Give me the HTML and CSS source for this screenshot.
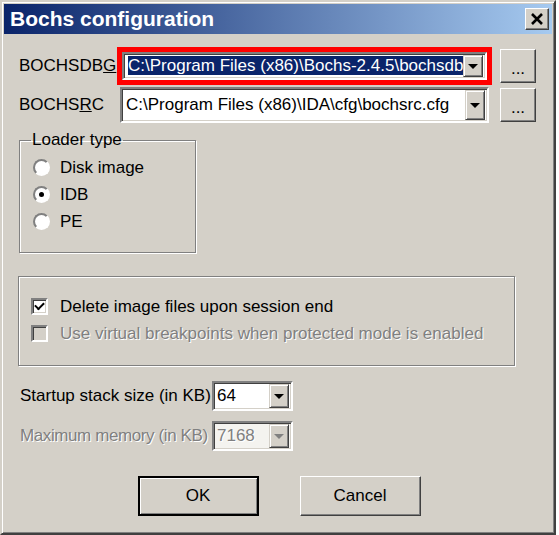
FILE: index.html
```html
<!DOCTYPE html>
<html lang="en">
<head>
    <meta charset="UTF-8">
    <title>Bochs configuration</title>
    <link rel="stylesheet" href="styles.css">
</head>
<body>
    <div class="window">
        <div class="titlebar">
            <span class="title">Bochs configuration</span>
            <button class="close-btn" aria-label="Close">
                <svg width="14" height="12" viewBox="0 0 14 12">
                    <path d="M2 1 L12 11 M12 1 L2 11" stroke="#000" stroke-width="2.6" fill="none"/>
                </svg>
            </button>
        </div>

        <div class="content">
            <div class="path-row">
                <span class="path-label label-dbg">BOCHSDB<u>G</u></span>
                <div class="highlight">
                    <div class="combo combo-dbg">
                        <span class="combo-value"><span class="selected">C:\Program Files (x86)\Bochs-2.4.5\bochsdbg.exe</span></span>
                        <span class="combo-btn"><span class="arrow"></span></span>
                    </div>
                </div>
                <button class="btn browse-btn">...</button>
            </div>

            <div class="path-row row-src">
                <span class="path-label label-src">BOCHS<u>R</u>C</span>
                <div class="combo combo-src">
                    <span class="combo-value">C:\Program Files (x86)\IDA\cfg\bochsrc.cfg</span>
                    <span class="combo-btn"><span class="arrow"></span></span>
                </div>
                <button class="btn browse-btn">...</button>
            </div>

            <fieldset class="group loader-group">
                <legend>Loader type</legend>
                <div class="option"><span class="radio"></span>Disk image</div>
                <div class="option"><span class="radio checked"></span>IDB</div>
                <div class="option"><span class="radio"></span>PE</div>
            </fieldset>

            <div class="group options-group">
                <div class="option"><span class="checkbox checked"></span>Delete image files upon session end</div>
                <div class="option disabled"><span class="checkbox"></span>Use virtual breakpoints when protected mode is enabled</div>
            </div>

            <div class="size-row">
                <span class="size-label">Startup stack size (in KB)</span>
                <div class="combo combo-small">
                    <span class="combo-value">64</span>
                    <span class="combo-btn"><span class="arrow"></span></span>
                </div>
            </div>
            <div class="size-row row-memory disabled">
                <span class="size-label">Maximum memory (in KB)</span>
                <div class="combo combo-small">
                    <span class="combo-value">7168</span>
                    <span class="combo-btn"><span class="arrow"></span></span>
                </div>
            </div>

            <div class="actions">
                <button class="btn action-btn default-btn">OK</button>
                <button class="btn action-btn">Cancel</button>
            </div>
        </div>
    </div>
</body>
</html>
```

FILE: styles.css
```css
:root {
    --face: #d4d0c8;
    --shadow: #808080;
    --dark: #404040;
    --light: #ffffff;
    --title-start: #0a246a;
    --title-end: #a6caf0;
    --disabled: #808080;
}

* {
    box-sizing: border-box;
}

body {
    margin: 0;
    background: #ffffff;
    font-family: 'Liberation Sans', Arial, sans-serif;
    font-size: 17px;
    color: #000;
}

.window {
    width: 556px;
    height: 535px;
    padding: 2px;
    background: var(--face);
    border: 2px solid;
    border-color: var(--face) var(--dark) var(--dark) var(--face);
    box-shadow: inset 1px 1px var(--light), inset -1px -1px var(--shadow);
}

.titlebar {
    height: 30px;
    display: flex;
    align-items: center;
    justify-content: space-between;
    padding: 0 3px 0 6px;
    background: linear-gradient(to right, var(--title-start), var(--title-end));
}

.title {
    color: #fff;
    font-weight: bold;
    font-size: 21px;
    line-height: 30px;
}

.close-btn {
    width: 24px;
    height: 22px;
    padding: 0;
    display: flex;
    align-items: center;
    justify-content: center;
    background: var(--face);
    border: 1px solid;
    border-color: var(--light) var(--dark) var(--dark) var(--light);
    box-shadow: inset -1px -1px var(--shadow);
}

.content {
    padding: 0 16px 0 15px;
}

/* path rows */
.path-row {
    display: flex;
    align-items: center;
    margin-top: 13px;
}

.row-src {
    margin-top: 2px;
}

.path-label {
    line-height: 20px;
    flex-shrink: 0;
}

.label-dbg {
    width: 98px;
}

.label-src {
    width: 101px;
}

.highlight {
    width: 375px;
    height: 38px;
    flex-shrink: 0;
    border: 5px solid #f00;
}

.combo {
    display: flex;
    flex-shrink: 0;
    background: #fff;
    border: 2px solid;
    border-color: var(--shadow) var(--light) var(--light) var(--shadow);
    box-shadow: inset 1px 1px var(--dark), inset -1px -1px var(--face);
    padding: 1px 2px 1px 3px;
}

.combo-dbg {
    height: 28px;
}

.combo-src {
    width: 369px;
    height: 36px;
}

.combo-value {
    flex: 1;
    overflow: hidden;
    white-space: nowrap;
    line-height: 20px;
    align-self: center;
    padding-left: 1px;
}

.selected {
    background: var(--title-start);
    color: #fff;
}

.combo-btn {
    width: 20px;
    display: flex;
    align-items: center;
    justify-content: center;
    background: var(--face);
    border: 1px solid;
    border-color: var(--face) var(--dark) var(--dark) var(--face);
    box-shadow: inset 1px 1px var(--light), inset -1px -1px var(--shadow);
}

.arrow {
    width: 0;
    height: 0;
    border-left: 5px solid transparent;
    border-right: 5px solid transparent;
    border-top: 5px solid #000;
}

.btn {
    font-family: inherit;
    font-size: 17px;
    color: #000;
    background: var(--face);
    border: 1px solid;
    border-color: var(--light) var(--dark) var(--dark) var(--light);
    box-shadow: inset -1px -1px var(--shadow), inset 1px 1px var(--face);
    padding: 0;
}

.browse-btn {
    width: 36px;
    height: 34px;
    margin-left: auto;
    line-height: 20px;
    padding-top: 6px;
}

/* groups */
.group {
    border: 1px solid var(--shadow);
    box-shadow: inset 1px 1px var(--light), 1px 1px var(--light);
    margin: 0;
}

.loader-group {
    width: 177px;
    margin-top: 7px;
    padding: 4px 0 17px 13px;
}

.loader-group legend {
    line-height: 20px;
    padding: 0 1px;
    margin-left: -2px;
}

.option {
    height: 27px;
    display: flex;
    align-items: center;
    gap: 10px;
    white-space: nowrap;
}

.radio {
    width: 17px;
    height: 17px;
    border-radius: 50%;
    background: #fff;
    border: 2px solid;
    border-color: var(--shadow) var(--light) var(--light) var(--shadow);
    display: flex;
    align-items: center;
    justify-content: center;
}

.radio.checked::after {
    content: "";
    width: 5px;
    height: 5px;
    border-radius: 50%;
    background: #000;
}

.options-group {
    width: 497px;
    height: 90px;
    margin: 23px 0 0 -1px;
    padding: 16px 0 0 12px;
}

.options-group .option {
    gap: 12px;
}

.checkbox {
    width: 17px;
    height: 17px;
    background: #fff;
    border: 2px solid;
    border-color: var(--shadow) var(--light) var(--light) var(--shadow);
    box-shadow: inset 1px 1px var(--dark), inset -1px -1px var(--face);
    display: flex;
    align-items: center;
    justify-content: center;
}

.checkbox.checked::after {
    content: "";
    width: 7px;
    height: 4px;
    margin-top: -3px;
    border-left: 2px solid #000;
    border-bottom: 2px solid #000;
    transform: rotate(-45deg);
}

.disabled {
    color: var(--disabled);
    text-shadow: 1px 1px var(--light);
}

.option.disabled .checkbox {
    background: var(--face);
}

/* size rows */
.size-row {
    display: flex;
    align-items: center;
    margin: 15px 0 0 1px;
}

.row-memory {
    margin-top: 10px;
}

.size-label {
    width: 192px;
    flex-shrink: 0;
    white-space: nowrap;
}

.row-memory .size-label {
    letter-spacing: -0.4px;
}

.combo-small {
    width: 81px;
    height: 30px;
}

.combo-small .combo-value {
    padding-left: 0;
}

.row-memory .combo {
    background: #f4f3ef;
}

.row-memory .arrow {
    border-top-color: var(--disabled);
}

/* buttons */
.actions {
    display: flex;
    justify-content: center;
    gap: 41px;
    margin-top: 25px;
    padding-left: 3px;
}

.action-btn {
    width: 121px;
    height: 40px;
}

.default-btn {
    border: 2px solid #000;
    box-shadow: inset 1px 1px var(--light), inset -1px -1px var(--shadow);
}
```
